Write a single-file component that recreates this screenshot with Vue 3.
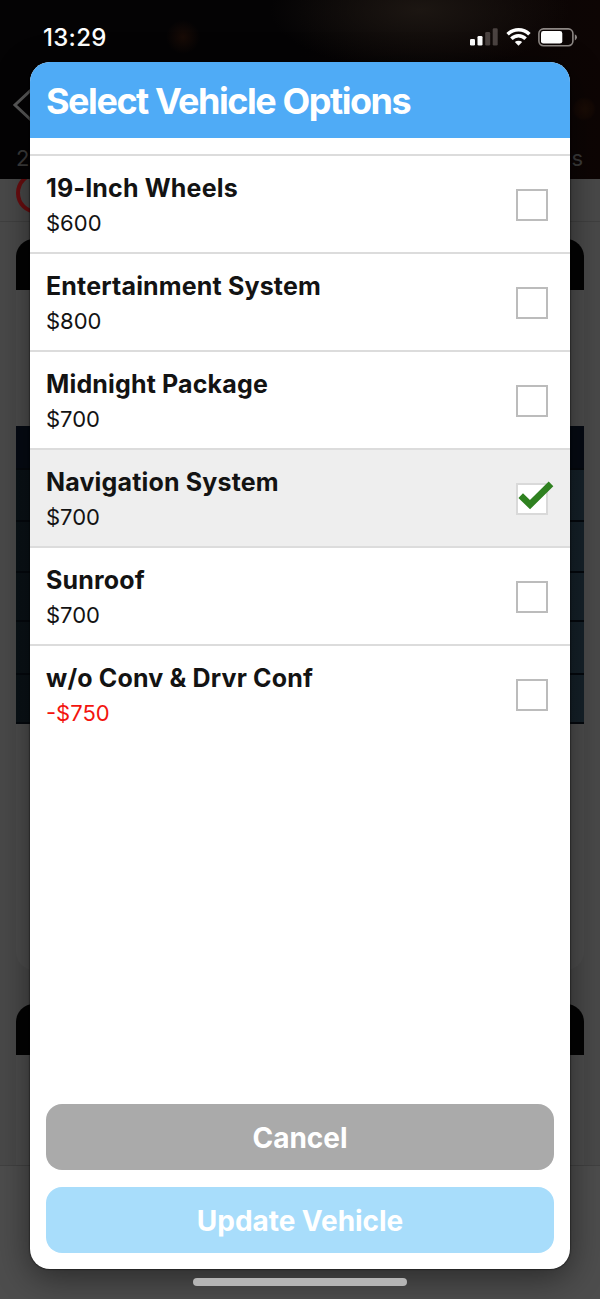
<template>
  <div class="screen">
    <div class="page">
      <div class="hero">
        <div class="status-bar">
          <span class="clock">13:29</span>
          <div class="status-icons">
            <svg class="signal" width="28" height="18" viewBox="0 0 28 18">
              <rect x="0" y="11" width="5" height="6.5" rx="1.3" fill="#fff" />
              <rect x="7.5" y="8" width="5" height="9.5" rx="1.3" fill="#fff" />
              <rect x="15.2" y="4" width="5" height="13.5" rx="1.3" fill="#4b4341" />
              <rect x="22.7" y="0.3" width="5" height="17.2" rx="1.3" fill="#4b4341" />
            </svg>
            <svg class="wifi" width="25" height="18" viewBox="0 0 25 18">
              <path d="M1.6 6.3a15.4 15.4 0 0 1 21.8 0" />
              <path d="M5.4 10.8a9.8 9.8 0 0 1 14.2 0" />
              <path class="wifi-dot" d="M8.8 14.1a5.4 5.4 0 0 1 7.4 0L12.5 17.8z" />
            </svg>
            <svg class="battery" width="40" height="19" viewBox="0 0 40 19">
              <rect x="0.9" y="0.9" width="34" height="16.8" rx="4.6" fill="none" stroke="#8d8784" stroke-width="1.6" />
              <rect x="3" y="3" width="21.3" height="12.6" rx="2.4" fill="#fff" />
              <path d="M36.8 6.2q2.2 1.1 2.2 3.1t-2.2 3.1z" fill="#8d8784" />
            </svg>
          </div>
        </div>
        <div class="nav-row">
          <svg width="22" height="34" viewBox="0 0 22 34">
            <path d="M19 2L3 17l16 15" fill="none" stroke="#5b5b5b" stroke-width="3" />
          </svg>
        </div>
        <div class="subtitle">
          <span>2</span>
          <span>s</span>
        </div>
      </div>
      <div class="toolbar">
        <svg width="44" height="43" viewBox="0 0 44 43">
          <circle cx="21" cy="14" r="19" fill="none" stroke="#6a0d0f" stroke-width="4" />
        </svg>
      </div>
      <div class="card">
        <div class="card-head"></div>
        <div class="table">
          <div v-for="row in tableRows" :key="row.id" class="table-row" :style="{ height: row.height + 'px' }"></div>
        </div>
      </div>
      <div class="card second">
        <div class="card-head"></div>
      </div>
      <div class="footer"></div>
    </div>

    <div class="modal">
      <header class="modal-header">Select Vehicle Options</header>
      <ul class="options">
        <li
          v-for="option in options"
          :key="option.name"
          :class="{ option: true, selected: option.selected }"
          @click="option.selected = !option.selected">
          <div>
            <div class="name">{{ option.name }}</div>
            <div :class="{ price: true, negative: option.price < 0 }">{{ formatPrice(option.price) }}</div>
          </div>
          <div class="checkbox">
            <svg v-if="option.selected" class="check" width="36" height="30" viewBox="0 0 36 30">
              <path d="M2.7 15.7L12 24.6L33 3.8" />
            </svg>
          </div>
        </li>
      </ul>
      <div class="actions">
        <button class="cancel">Cancel</button>
        <button class="update">Update Vehicle</button>
      </div>
    </div>
    <div class="home-indicator"></div>
  </div>
</template>

<script setup>
import { ref } from 'vue'

const options = ref([
  { name: '19-Inch Wheels', price: 600, selected: false },
  { name: 'Entertainment System', price: 800, selected: false },
  { name: 'Midnight Package', price: 700, selected: false },
  { name: 'Navigation System', price: 700, selected: true },
  { name: 'Sunroof', price: 700, selected: false },
  { name: 'w/o Conv & Drvr Conf', price: -750, selected: false }
])

const tableRows = [44, 52, 51, 49, 53, 49].map((height, id) => ({ id, height }))

const formatPrice = (price) => {
  return (price < 0 ? '-$' : '$') + Math.abs(price)
}
</script>

<style>
body {
  margin: 0;
  background: #484848;
}
</style>

<style scoped>
.screen {
  position: relative;
  width: 600px;
  height: 1299px;
  overflow: hidden;
  font-family: Inter, "Liberation Sans", sans-serif;
}

.page {
  height: 100%;
  display: flex;
  flex-direction: column;
  background: #494949;
}

.hero {
  height: 179px;
  flex: none;
  display: flex;
  flex-direction: column;
  background:
    radial-gradient(circle at 183px 37px, #180b06 0, transparent 17px),
    radial-gradient(circle at 584px 109px, #1a0c05 0, #130804 9px, transparent 12px),
    radial-gradient(ellipse at 420px 10px, #1c1612 0, transparent 150px),
    linear-gradient(90deg, #040304 50%, #0d0504);
}

.status-bar {
  height: 62px;
  box-sizing: border-box;
  padding: 22px 22px 0 43px;
  display: flex;
  justify-content: space-between;
  align-items: flex-start;
  color: #fff;
}

.clock {
  font-size: 24px;
  line-height: 31px;
  font-weight: 500;
  letter-spacing: 0.3px;
}

.status-icons {
  display: flex;
  gap: 8px;
  padding-top: 6px;
}

.battery {
  margin-left: -1px;
}

.wifi path {
  fill: none;
  stroke: #fff;
  stroke-width: 3.5;
}

.wifi .wifi-dot {
  fill: #fff;
  stroke: none;
}

.nav-row {
  height: 79px;
  padding: 26px 12px 0;
  box-sizing: border-box;
}

.subtitle {
  padding: 4px 17px 0 16px;
  display: flex;
  justify-content: space-between;
  font-size: 22px;
  line-height: 26px;
  color: #3c3c3c;
}

.toolbar {
  height: 43px;
  flex: none;
  padding-left: 16px;
  box-sizing: border-box;
  border-bottom: 1px solid #404040;
}

.card {
  height: 731px;
  flex: none;
  margin: 17px 16px 0;
  border-radius: 18px;
  background: #4d4d4d;
  overflow: hidden;
}

.card-head {
  height: 51px;
  background: #030303;
}

.card.second {
  height: 161px;
  margin-top: 34px;
  border-radius: 18px 18px 0 0;
}

.table {
  margin-top: 136px;
  background: linear-gradient(90deg, #0a1116, #152129);
}

.table-row {
  box-sizing: border-box;
  border-bottom: 2px solid #04080d;
}

.table-row:first-child {
  background: #050a13;
}

.footer {
  flex: 1;
  background: #4d4d4d;
  border-top: 1px solid #414141;
}

.modal {
  position: absolute;
  top: 62px;
  left: 30px;
  width: 540px;
  height: 1207px;
  display: flex;
  flex-direction: column;
  border-radius: 20px;
  background: #fff;
  overflow: hidden;
  box-shadow: 0 0 2px #000, 0 8px 34px rgba(0, 0, 0, 0.48);
}

.modal-header {
  height: 76px;
  flex: none;
  padding: 0 16px;
  font-size: 36px;
  font-weight: 700;
  line-height: 78px;
  letter-spacing: -1.46px;
  color: #fff;
  background: #4fabf6;
}

.options {
  flex: 1;
  list-style: none;
  margin: 16px 0 0;
  padding: 0;
}

.option {
  height: 98px;
  box-sizing: border-box;
  padding: 0 22px 0 16px;
  display: flex;
  align-items: center;
  justify-content: space-between;
  border-top: 2px solid #dcdcdc;
}

.option.selected {
  background: #eee;
}

.name {
  padding-top: 4px;
  font-size: 25px;
  font-weight: 700;
  line-height: 35px;
  letter-spacing: 0.16px;
  color: #131313;
}

.price {
  font-size: 22px;
  line-height: 35px;
  color: #131313;
}

.price.negative {
  color: #f3140e;
}

.checkbox {
  position: relative;
  width: 32px;
  height: 32px;
  margin-top: 1px;
  box-sizing: border-box;
  border: 2px solid #bcbcbc;
  background: #fff;
}

.selected .checkbox {
  border-color: #d9d9d9;
}

.check {
  position: absolute;
  top: -5px;
  left: 0;
}

.check path {
  fill: none;
  stroke: #2f8120;
  stroke-width: 6.6;
}

.actions {
  display: flex;
  flex-direction: column;
  gap: 17px;
  padding: 0 16px 16px;
}

.actions button {
  height: 66px;
  padding: 0;
  border: 0;
  border-radius: 16px;
  font-family: inherit;
  font-size: 28px;
  font-weight: 700;
  line-height: 68px;
  letter-spacing: -0.05px;
  color: #fff;
}

.actions .cancel {
  background: #aaa;
}

.actions .update {
  background: #a8ddfb;
}

.home-indicator {
  position: absolute;
  left: 193px;
  bottom: 13px;
  width: 214px;
  height: 8px;
  border-radius: 4px;
  background: #b5b5b5;
}
</style>
